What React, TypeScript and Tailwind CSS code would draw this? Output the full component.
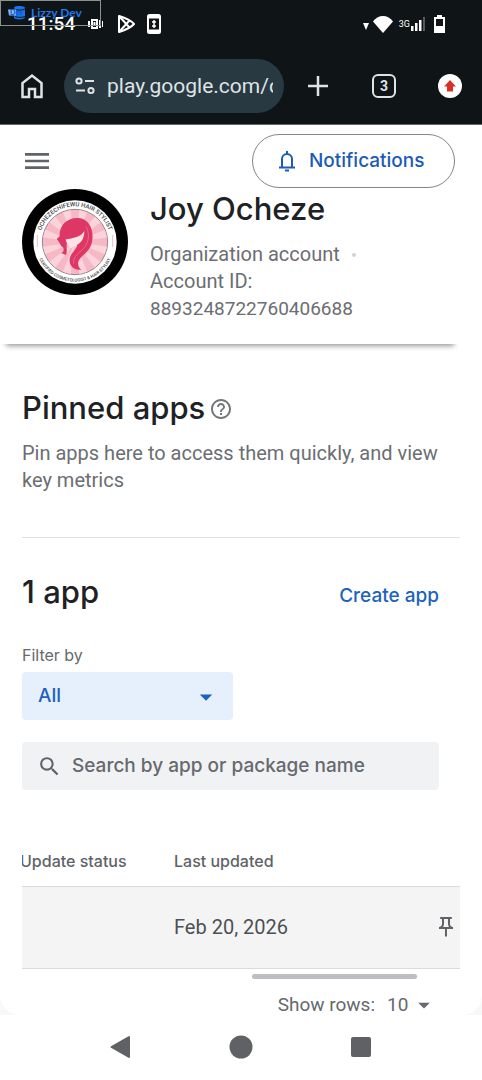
import * as React from "react";
import clsx from "clsx";
import { MdArrowDropDown, MdHelpOutline, MdMenu, MdOutlinePushPin, MdSearch } from "react-icons/md";

interface AppRow {
    id: string;
    updateStatus: string;
    lastUpdated: string;
}

const rows: AppRow[] = [{ id: "app-1", updateStatus: "", lastUpdated: "Feb 20, 2026" }];

function RecorderBadge() {
    return (
        <div className="absolute left-0 top-0 flex h-[26px] w-[101px] items-center gap-1 border border-[#8b9094] pl-1.5">
            <svg viewBox="0 0 20 16" className="h-4 w-5" aria-hidden="true">
                <path d="M7 2.5C7 .5 17 .5 18 2.5v10c-1 2.5-10 2.5-11 .5z" fill="#1a73e8" />
                <path d="M7 4c3 1.5 8 1.5 11 0M8 11.5c3 1.2 7 1.2 10 0" fill="none" stroke="#10161a" strokeWidth="1" />
                <path d="M1 4.5h8v6H2z" fill="#7db7ff" />
                <text x="3" y="10" fontSize="7" fontWeight="700" fill="#0b57d0" fontFamily="Lato, sans-serif">
                    Dev
                </text>
            </svg>
            <span className="font-[Lato,sans-serif] text-xs font-bold text-[#1f78ee]">Lizzy Dev</span>
        </div>
    );
}

function StatusBar() {
    return (
        <div className="relative flex h-12 items-center justify-between pl-[27px] pr-[37px] text-white">
            <div className="flex items-center gap-4">
                <time className="font-[Roboto,sans-serif] text-[19px] font-medium leading-6">11:54</time>
                <svg viewBox="0 0 16 14" className="-ml-1 h-3.5 w-4" fill="none" stroke="currentColor" strokeWidth="2" aria-hidden="true">
                    <path d="M2 4v6M5 3h5v8H5zM7.500 5v4M13 3v8" />
                    <path d="M15.500 4v6" strokeWidth="1" />
                </svg>
                <svg viewBox="0 0 18 20" className="-ml-0.5 h-5 w-[18px]" fill="none" stroke="currentColor" strokeWidth="2" strokeLinejoin="round" aria-hidden="true">
                    <path d="M2 2v16c5-1.500 12-4.500 15-8C14 6.500 7 3.500 2 2z" />
                    <path d="M2 2l10.500 11.500M2 18L12.500 6.500" />
                </svg>
                <svg viewBox="0 0 14 20" className="-ml-1 h-5 w-3.5" aria-hidden="true">
                    <rect x="1" y="1" width="12" height="18" rx="1.5" fill="none" stroke="currentColor" strokeWidth="2" />
                    <path d="M1 3h12M1 17h12" stroke="currentColor" strokeWidth="3" />
                    <path d="M7 6v8M5 8h4M5 12h4" stroke="currentColor" strokeWidth="1.5" />
                </svg>
            </div>
            <div className="flex items-center">
                <svg viewBox="0 0 6 7" className="mt-1 h-[7px] w-1.5" fill="currentColor" aria-hidden="true">
                    <path d="M0 0h6L3 7z" />
                </svg>
                <svg viewBox="0 0 20 17" className="ml-1 h-[17px] w-5" fill="currentColor" aria-hidden="true">
                    <path d="M10 17L0 5.5C2.500 2 6 0 10 0s7.500 2 10 5.500z" />
                </svg>
                <span className="ml-1.5 font-[Roboto,sans-serif] text-[9px] leading-3">3G</span>
                <svg viewBox="0 0 16 14" className="h-3.5 w-4" fill="currentColor" aria-hidden="true">
                    <path d="M1 9h2.500v5H1zM5 6h2.500v8H5zM9 3h2.500v11H9z" />
                    <path d="M13 0h2v14h-2z" opacity=".3" />
                </svg>
                <svg viewBox="0 0 11 18" className="ml-2 h-[18px] w-[11px]" fill="currentColor" aria-hidden="true">
                    <path fillRule="evenodd" d="M3 0h5v2h3v16H0V2h3zM2 4v7h7V4z" />
                </svg>
            </div>
            <RecorderBadge />
        </div>
    );
}

function BrowserBar() {
    return (
        <div className="flex h-[77px] items-center gap-[22px] border-b border-[#5f676c] pl-[21px] pr-5 text-[#dfe3e6]">
            <button type="button" aria-label="Home" className="-mr-px">
                <svg viewBox="0 0 22 26" className="h-[26px] w-[22px]" fill="none" stroke="currentColor" strokeWidth="2.5" aria-hidden="true">
                    <path d="M1.5 24V10L11 2.500l9.500 7.500v14H14v-8H8v8z" />
                </svg>
            </button>
            <div className="flex h-[54px] min-w-0 flex-1 items-center gap-3 rounded-full bg-[#293941] px-[11px]">
                <svg viewBox="0 0 20 18" className="h-[18px] w-5 shrink-0" fill="none" stroke="currentColor" strokeWidth="2" aria-hidden="true">
                    <circle cx="4" cy="4" r="2.6" />
                    <path d="M10 4h9M1 13.5h9" />
                    <circle cx="16" cy="13.5" r="2.6" />
                </svg>
                <input
                    type="text"
                    aria-label="Address"
                    defaultValue="play.google.com/console"
                    className="w-full min-w-0 flex-1 bg-transparent font-[Roboto,sans-serif] text-[21px] leading-8 outline-none"
                />
            </div>
            <div className="flex items-center gap-[42px]">
                <button type="button" aria-label="New tab">
                    <svg viewBox="0 0 24 24" className="h-6 w-6" stroke="currentColor" strokeWidth="2.5" aria-hidden="true">
                        <path d="M12 2v20M2 12h20" />
                    </svg>
                </button>
                <button
                    type="button"
                    aria-label="3 open tabs"
                    className="flex h-6 w-6 items-center justify-center rounded-md border-2 border-current font-[Roboto,sans-serif] text-sm font-bold"
                >
                    3
                </button>
                <button type="button" aria-label="Update available" className="flex h-6 w-6 items-center justify-center rounded-full bg-white">
                    <svg viewBox="0 0 12 12" className="h-3 w-3" fill="#d93025" aria-hidden="true">
                        <path d="M6 0l6 6.500H9V11.500H3V6.500H0z" />
                    </svg>
                </button>
            </div>
        </div>
    );
}

function Avatar() {
    const rays = Array.from({ length: 12 }, (_, i) => i * 30);
    return (
        <svg viewBox="0 0 318 318" className="h-[106px] w-[106px] shrink-0" role="img" aria-label="Joy Ocheze">
            <defs>
                <path id="ring-top" d="M52 159a107 107 0 0 1 214 0" />
                <path id="ring-bottom" d="M40 159a119 119 0 0 0 238 0" />
            </defs>
            <circle cx="159" cy="159" r="159" fill="#000" />
            <circle cx="159" cy="159" r="125" fill="#fff" />
            <circle cx="159" cy="159" r="98" fill="#f7b8c5" stroke="#6b5a60" strokeWidth="2" />
            {rays.map((angle) => (
                <path key={angle} d="M159 159L147 63h24z" fill="#fbd3db" transform={`rotate(${angle + 15} 159 159)`} />
            ))}
            <path
                d="M113 142C110 108 138 85 169 87C200 89 215 119 211 153C208 180 190 193 176 206C165 218 166 234 178 242C156 246 140 230 143 209C146 192 162 184 166 168L136 162C130 172 138 182 132 198L117 192C125 190 127 183 123 175C114 170 116 163 104 150z"
                fill="#df3765"
            />
            <path d="M187 126C178 144 152 148 131 151C133 163 138 170 146 178C158 168 186 168 187 126z" fill="#fde3e8" />
            <path d="M192 112c14 26 7 54-13 72-14 12-26 22-24 40" fill="none" stroke="#ee7c9b" strokeWidth="2" />
            <g fontFamily="Roboto, sans-serif" fontWeight="500" fill="#444" textAnchor="middle">
                <text fontSize="18">
                    <textPath href="#ring-top" startOffset="50%">
                        OCHEZECHIFEWU HAIR STYLIST
                    </textPath>
                </text>
                <text fontSize="13">
                    <textPath href="#ring-bottom" startOffset="50%">
                        CERTIFIED COSMETOLOGIST &amp; HAIR STYLIST
                    </textPath>
                </text>
            </g>
            <path d="M46 138v36M272 138v36" stroke="#d9a0ae" strokeWidth="2" />
        </svg>
    );
}

function AccountHeader() {
    return (
        <header className="mr-[22px] pb-[22px] pt-[9px] shadow-[0_8px_5px_-6px_rgba(0,0,0,0.4)]">
            <div className="flex items-center justify-between pl-[21px] pr-[5px]">
                <button type="button" aria-label="Open menu" className="text-[#616467]">
                    <MdMenu className="h-8 w-8" />
                </button>
                <button
                    type="button"
                    className="flex h-[54px] w-[203px] items-center gap-3 rounded-full border border-[#80868b] pl-6 text-[19px] font-medium text-[#1c5bb8]"
                >
                    <svg viewBox="0 0 20 24" className="h-6 w-5" fill="none" stroke="currentColor" strokeWidth="2" aria-hidden="true">
                        <path d="M5 18V10a5 5 0 0 1 10 0v8M2 18.500h16" />
                        <path d="M10 2v3M8 21.500h4" />
                    </svg>
                    Notifications
                </button>
            </div>
            <div className="mt-px flex gap-[22px] pl-[22px]">
                <Avatar />
                <div className="min-w-0 flex-1">
                    <h1 className="text-[31px] font-medium leading-10 text-[#202124]">Joy Ocheze</h1>
                    <div className="mt-3 font-[Roboto,sans-serif] text-xl leading-[27px] text-[#6b6e72]">
                        <p className="flex items-center gap-3">
                            Organization account
                            <span className="h-1 w-1 rounded-full bg-[#d0d3d6]" />
                        </p>
                        <p>Account ID:</p>
                        <p className="text-[19px] leading-[27px]">8893248722760406688</p>
                    </div>
                </div>
            </div>
        </header>
    );
}

function PinnedApps() {
    return (
        <section className="mx-[22px] border-b border-[#dfe1e3] pb-[43px] pt-11">
            <div className="flex items-center gap-1">
                <h2 className="text-[31px] font-medium leading-10 text-[#202124]">Pinned apps</h2>
                <button type="button" aria-label="About pinned apps" className="mt-0.5 text-[#74777a]">
                    <MdHelpOutline className="h-6 w-6" />
                </button>
            </div>
            <p className="mt-3 font-[Roboto,sans-serif] text-xl leading-[27px] text-[#6b6e72]">
                Pin apps here to access them quickly, and view key metrics
            </p>
        </section>
    );
}

function AppsTable() {
    return (
        <div className="overflow-hidden">
            <table className="-ml-0.5 w-[calc(100%+2px)] table-fixed text-left">
                <thead>
                    <tr className="h-[50px] text-base text-[#5f6368]">
                        <th className="w-[154px] font-medium">Update status</th>
                        <th className="font-medium">Last updated</th>
                        <th className="w-8" aria-label="Pin" />
                    </tr>
                </thead>
                <tbody>
                    {rows.map((row, index) => (
                        <tr
                            key={row.id}
                            className={clsx("h-[82px] border-b border-[#d9dbdd] bg-[#f4f4f4]", index === 0 && "border-t")}
                        >
                            <td>{row.updateStatus}</td>
                            <td className="font-[Roboto,sans-serif] text-xl text-[#4d5054]">{row.lastUpdated}</td>
                            <td>
                                <button type="button" aria-label="Pin app" className="ml-1.5 block text-[#5f6368]">
                                    <MdOutlinePushPin className="h-6 w-6" />
                                </button>
                            </td>
                        </tr>
                    ))}
                </tbody>
            </table>
        </div>
    );
}

function AppsSection() {
    return (
        <section className="px-[22px] pt-[34px]">
            <div className="flex items-center justify-between pr-[21px]">
                <h2 className="text-[31px] font-medium leading-10 text-[#202124]">1 app</h2>
                <a href="#create" className="mt-2 text-[19px] font-medium leading-7 text-[#1c63bd]">
                    Create app
                </a>
            </div>
            <label htmlFor="filter" className="mt-[31px] block text-base leading-6 text-[#66696d]">
                Filter by
            </label>
            <div className="relative mt-[5px] w-[211px]">
                <select
                    id="filter"
                    defaultValue="all"
                    className="h-12 w-full appearance-none rounded bg-[#e6effc] pl-4 text-[19px] font-medium text-[#1c63bd] outline-none"
                >
                    <option value="all">All</option>
                </select>
                <MdArrowDropDown className="pointer-events-none absolute right-3 top-2.5 h-[30px] w-[30px] text-[#1c63bd]" />
            </div>
            <div className="mr-[21px] mt-[22px] flex h-12 items-center gap-2.5 rounded bg-[#f1f2f3] pl-[15px]">
                <MdSearch className="h-[25px] w-[25px] shrink-0 text-[#5f6368]" />
                <input
                    type="search"
                    aria-label="Search by app or package name"
                    placeholder="Search by app or package name"
                    className="min-w-0 flex-1 bg-transparent text-[19px] font-medium outline-none placeholder:text-[#66696d]"
                />
            </div>
            <div className="mt-[46px]">
                <AppsTable />
            </div>
            <div className="ml-[230px] mr-[43px] mt-[5px] h-[5px] rounded-full bg-[#bdbec1]" />
            <div className="mr-[22px] mt-4 flex h-5 items-center justify-end gap-2 font-[Roboto,sans-serif] text-[19px] leading-5 text-[#66696d]">
                <label htmlFor="page-size">Show rows:</label>
                <div className="relative flex items-center">
                    <select id="page-size" defaultValue="10" className="w-[55px] appearance-none bg-transparent pl-1 outline-none">
                        <option value="10">10</option>
                    </select>
                    <MdArrowDropDown className="pointer-events-none absolute right-0 h-7 w-7" />
                </div>
            </div>
        </section>
    );
}

function SystemNav() {
    return (
        <nav className="flex h-16 items-center justify-center gap-24 bg-white text-[#606164]">
            <button type="button" aria-label="Back">
                <svg viewBox="0 0 24 24" className="h-6 w-6" fill="currentColor" stroke="currentColor" strokeWidth="2" strokeLinejoin="round" aria-hidden="true">
                    <path d="M2.5 12L20 2v20z" />
                </svg>
            </button>
            <button type="button" aria-label="Home screen">
                <svg viewBox="0 0 24 24" className="h-6 w-6" fill="currentColor" aria-hidden="true">
                    <circle cx="12" cy="12" r="11.5" />
                </svg>
            </button>
            <button type="button" aria-label="Recent apps">
                <svg viewBox="0 0 24 24" className="h-6 w-6" fill="currentColor" aria-hidden="true">
                    <rect x="2" y="2" width="20" height="20" rx="2" />
                </svg>
            </button>
        </nav>
    );
}

export default function App() {
    return (
        <div className="flex min-h-screen flex-col bg-white font-[Inter,sans-serif]">
            <div className="bg-[#0f1417]">
                <StatusBar />
                <BrowserBar />
            </div>
            <div className="bg-[#f8f8f8]">
                <main className="rounded-b-[20px] bg-white">
                    <AccountHeader />
                    <PinnedApps />
                    <AppsSection />
                </main>
            </div>
            <SystemNav />
        </div>
    );
}
